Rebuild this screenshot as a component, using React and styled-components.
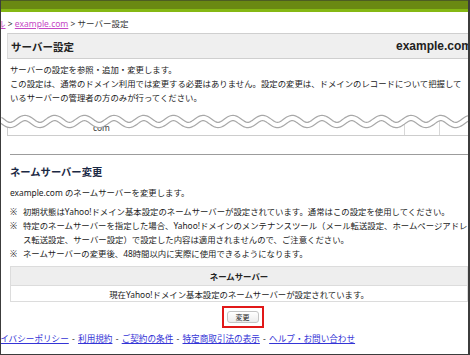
import React from 'react'
import styled, { createGlobalStyle } from 'styled-components'

const GlobalStyle = createGlobalStyle`
  html, body {
    margin: 0;
    padding: 0;
    background: #fff;
  }
  body {
    font-family: "Noto Sans", "Noto Sans CJK JP", sans-serif;
    color: #222;
  }
`

const Frame = styled.div`
  width: 470px;
  height: 355px;
  box-sizing: border-box;
  border-left: 1px solid #3c3c3c;
  border-right: 2px solid #3c3c3c;
  border-bottom: 1px solid #3c3c3c;
  overflow: hidden;
  background: #fff;
`

const TopBar = styled.div`
  height: 8px;
  border-top: 1px solid #4d5d22;
  border-bottom: 3px solid #85b814;
  background: #6a8912;
`

const Content = styled.div`
  width: 477px;
`

const Crumbs = styled.div`
  margin-top: 6px;
  font-size: 8.5px;
  line-height: 11px;
  white-space: nowrap;
  color: #333;

  a {
    color: #c548c5;
    text-decoration: underline;
  }
  a:first-child {
    margin-left: -72px;
  }
`

const Panel = styled.div`
  margin: 4px 0 0 6px;
  height: 24px;
  padding: 0 6px 0 3px;
  display: flex;
  align-items: center;
  justify-content: space-between;
  background: #efefef;
  border-top: 1px solid #cfcfcf;
  border-bottom: 1px solid #cfcfcf;
  border-left: 1px solid #dcdcdc;
`

const PanelTitle = styled.h1`
  margin: 0;
  font-size: 10.5px;
  font-weight: bold;
  color: #222;
`

const PanelDomain = styled.span`
  font-family: "Liberation Sans", Arial, sans-serif;
  font-size: 12px;
  font-weight: bold;
  color: #222;
`

const Text = styled.div`
  margin-top: ${p => p.$top || 0}px;
  padding-left: 9px;
  font-size: 8.4px;
  line-height: 14px;
  white-space: nowrap;
`

const Cut = styled.div`
  position: relative;
  margin: 12px 0 0 6px;
`

const Remnant = styled.div`
  display: grid;
  grid-template-columns: 396px 35px 1fr;
  height: 18px;
  border-left: 1px solid #cdcdcd;
  border-bottom: 1px solid #cdcdcd;
`

const RemnantCell = styled.div`
  padding: 5px 0 0 ${p => p.$pad || 0}px;
  font-size: 8.4px;
  line-height: 12px;
  color: #333;
  & + & {
    border-left: 1px solid #d8d8d8;
  }
`

const Wave = styled.svg`
  position: absolute;
  top: -4px;
  left: -7px;
  display: block;
`

const Divider = styled.div`
  margin: 18px 0 0 9px;
  height: 1px;
  background: #9c9c9c;
`

const SectionTitle = styled.h2`
  margin: 10px 0 0;
  padding-left: 9px;
  font-size: 10.3px;
  line-height: 14px;
  font-weight: bold;
  color: #1b2944;
`

const Notes = styled.div`
  margin-top: 5px;
  padding-left: 9px;
`

const Note = styled.div`
  display: flex;
  font-size: 8.4px;
  line-height: 14px;
  white-space: nowrap;
`

const Mark = styled.span`
  flex: none;
  width: 13px;
`

const Table = styled.table`
  margin: 5px 0 0 9px;
  width: 458px;
  border-collapse: collapse;
  font-size: 8.4px;

  th, td {
    border: 1px solid #dcdcdc;
    padding: 0;
    text-align: center;
  }
  th {
    height: 18px;
    background: #eeeeee;
    font-weight: bold;
  }
  td {
    height: 15px;
  }
`

const ButtonRow = styled.div`
  margin-top: 4px;
  padding-left: 25px;
  display: flex;
  justify-content: center;
  width: 458px;
  box-sizing: border-box;
`

const Highlight = styled.div`
  width: 42px;
  height: 22px;
  box-sizing: border-box;
  border: 2px solid #e11818;
  display: flex;
  align-items: center;
  justify-content: center;
`

const Button = styled.button`
  width: 32px;
  height: 12px;
  padding: 0;
  border: 1px solid #c4c4c4;
  border-radius: 3px;
  background: linear-gradient(#ffffff, #ececec);
  font-family: "Noto Sans CJK JP", sans-serif;
  font-size: 7px;
  line-height: 10px;
  color: #222;
`

const Footer = styled.div`
  margin-top: 5px;
  font-size: 8.6px;
  line-height: 12px;
  white-space: nowrap;
  color: #333;

  a {
    color: #3434d6;
    text-decoration: underline;
  }
  a:first-child {
    margin-left: -18px;
  }
`

const Sep = styled.span`
  margin: 0 1px;
`

const wavePoints = () => {
  const pts = []
  for (let x = 0; x <= 480; x += 1) {
    const y = 8.5 - 3.5 * Math.cos((2 * Math.PI * (x - 25)) / 29.7)
    pts.push([x, y])
  }
  return pts
}

const CutWave = () => {
  const pts = wavePoints()
  const line = pts.map(([x, y], i) => `${i ? 'L' : 'M'}${x},${y.toFixed(2)}`).join(' ')
  const cover = `M0,0 ${pts.map(([x, y]) => `L${x},${y.toFixed(2)}`).join(' ')} L480,0 Z`
  return (
    <Wave width="480" height="17" viewBox="0 0 480 17">
      <path d={cover} fill="#fff" />
      <path d={line} fill="none" stroke="#a8a8a8" strokeWidth="6.4" />
      <path d={line} fill="none" stroke="#fff" strokeWidth="4" />
    </Wave>
  )
}

const footerLinks = [
  'プライバシーポリシー',
  '利用規約',
  'ご契約の条件',
  '特定商取引法の表示',
  'ヘルプ・お問い合わせ',
]

export default function App() {
  return (
    <>
      <GlobalStyle />
      <Frame>
        <TopBar />
        <Content>
          <Crumbs>
            <a>コントロールパネル</a> &gt; <a>example.com</a> &gt; サーバー設定
          </Crumbs>
          <Panel>
            <PanelTitle>サーバー設定</PanelTitle>
            <PanelDomain>example.com</PanelDomain>
          </Panel>
          <Text $top={4}>
            サーバーの設定を参照・追加・変更します。
            <br />
            この設定は、通常のドメイン利用では変更する必要はありません。設定の変更は、ドメインのレコードについて把握して
            <br />
            いるサーバーの管理者の方のみが行ってください。
          </Text>
          <Cut>
            <Remnant>
              <RemnantCell $pad={85}>com</RemnantCell>
              <RemnantCell />
              <RemnantCell />
            </Remnant>
            <CutWave />
          </Cut>
          <Divider />
          <SectionTitle>ネームサーバー変更</SectionTitle>
          <Text $top={7}>example.com のネームサーバーを変更します。</Text>
          <Notes>
            <Note>
              <Mark>※</Mark>
              <span>初期状態はYahoo!ドメイン基本設定のネームサーバーが設定されています。通常はこの設定を使用してください。</span>
            </Note>
            <Note>
              <Mark>※</Mark>
              <span>
                特定のネームサーバーを指定した場合、Yahoo!ドメインのメンテナンスツール（メール転送設定、ホームページアドレ
                <br />
                ス転送設定、サーバー設定）で設定した内容は適用されませんので、ご注意ください。
              </span>
            </Note>
            <Note>
              <Mark>※</Mark>
              <span>ネームサーバーの変更後、48時間以内に実際に使用できるようになります。</span>
            </Note>
          </Notes>
          <Table>
            <thead>
              <tr>
                <th>ネームサーバー</th>
              </tr>
            </thead>
            <tbody>
              <tr>
                <td>現在Yahoo!ドメイン基本設定のネームサーバーが設定されています。</td>
              </tr>
            </tbody>
          </Table>
          <ButtonRow>
            <Highlight>
              <Button>変更</Button>
            </Highlight>
          </ButtonRow>
          <Footer>
            {footerLinks.map((label, i) => (
              <React.Fragment key={label}>
                {i > 0 && <Sep> - </Sep>}
                <a>{label}</a>
              </React.Fragment>
            ))}
          </Footer>
        </Content>
      </Frame>
    </>
  )
}
